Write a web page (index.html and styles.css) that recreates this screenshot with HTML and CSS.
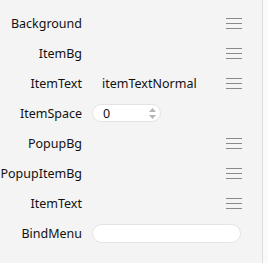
FILE: index.html
```html
<!DOCTYPE html>
<html lang="en">
<head>
    <meta charset="UTF-8">
    <title>Menu Properties</title>
    <link rel="stylesheet" href="styles.css">
</head>
<body>
    <div class="panel">
        <div class="row">
            <span class="label">Background</span>
            <span class="value"></span>
            <span class="menu-icon"></span>
        </div>
        <div class="row">
            <span class="label">ItemBg</span>
            <span class="value"></span>
            <span class="menu-icon"></span>
        </div>
        <div class="row">
            <span class="label">ItemText</span>
            <span class="value text">itemTextNormal</span>
            <span class="menu-icon"></span>
        </div>
        <div class="row">
            <span class="label">ItemSpace</span>
            <div class="value">
                <div class="spinbox">
                    <span class="spin-value">0</span>
                    <svg class="spin-arrows" width="7" height="11" viewBox="0 0 7 11">
                        <path d="M3.5 0 L7 4 L0 4 Z" fill="#b4b4b4"/>
                        <path d="M0 7 L7 7 L3.5 11 Z" fill="#b4b4b4"/>
                    </svg>
                </div>
            </div>
            <span></span>
        </div>
        <div class="row">
            <span class="label">PopupBg</span>
            <span class="value"></span>
            <span class="menu-icon"></span>
        </div>
        <div class="row">
            <span class="label">PopupItemBg</span>
            <span class="value"></span>
            <span class="menu-icon"></span>
        </div>
        <div class="row">
            <span class="label">ItemText</span>
            <span class="value"></span>
            <span class="menu-icon"></span>
        </div>
        <div class="row">
            <span class="label">BindMenu</span>
            <div class="value wide">
                <div class="textbox"></div>
            </div>
        </div>
    </div>
</body>
</html>
```

FILE: styles.css
```css
/* Property panel */
body {
    margin: 0;
    background-color: #fafafa;
    font-family: "Noto Sans", Arial, sans-serif;
    font-size: 12.5px;
    color: #111;
}

.panel {
    width: 262px;
    height: 263px;
    background-color: #f4f4f4;
    border-right: 1px solid #dedede;
    padding-top: 8px;
    box-sizing: content-box;
}

.row {
    display: grid;
    grid-template-columns: 82px 1fr 16px;
    column-gap: 10px;
    align-items: center;
    height: 30px;
    padding-right: 20px;
}

.label {
    text-align: right;
    white-space: nowrap;
    padding-top: 1px;
}

.value.text {
    padding-left: 10px;
    padding-top: 1px;
}

.value.wide {
    grid-column: 2 / 4;
    margin-right: 1px;
}

.menu-icon {
    height: 11px;
    border-top: 1px solid #8a8a8a;
    border-bottom: 1px solid #8a8a8a;
    box-sizing: border-box;
    background: linear-gradient(#8a8a8a, #8a8a8a) center / 100% 1px no-repeat;
}

.spinbox {
    width: 69px;
    height: 18px;
    box-sizing: border-box;
    background-color: #fff;
    border: 1px solid #e4e4e4;
    border-radius: 9px;
    display: flex;
    align-items: center;
    justify-content: space-between;
    padding: 0 4px 0 10px;
}

.textbox {
    height: 19px;
    box-sizing: border-box;
    background-color: #fff;
    border: 1px solid #e4e4e4;
    border-radius: 10px;
}
```
